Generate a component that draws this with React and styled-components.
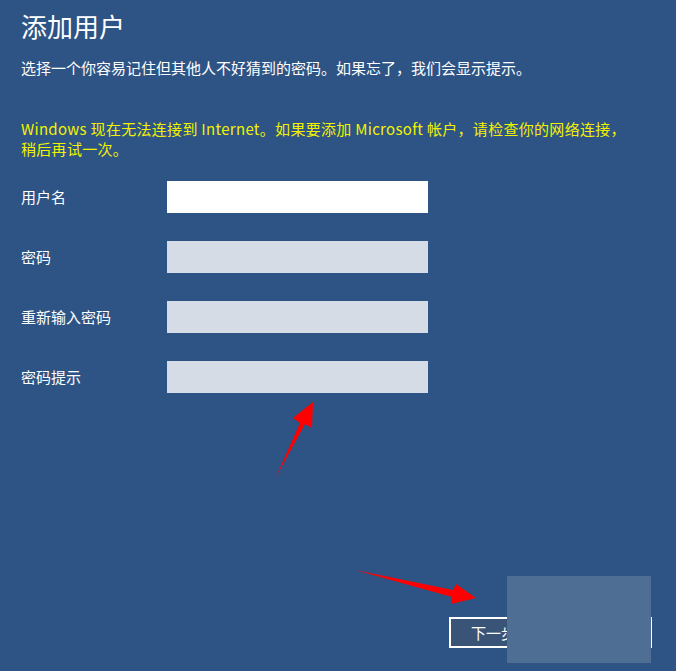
import React from 'react';
import styled, { createGlobalStyle } from 'styled-components';

const GlobalStyle = createGlobalStyle`
    html, body {
        margin: 0;
        padding: 0;
        background: #2e5485;
    }
    * {
        box-sizing: border-box;
    }
`;

const Page = styled.div`
    position: relative;
    width: 676px;
    height: 671px;
    overflow: hidden;
    background: #2e5485;
    color: #ffffff;
    font-family: "Noto Sans CJK SC", "Noto Sans", sans-serif;
    display: flex;
    flex-direction: column;
    padding: 0 21px;
`;

const Title = styled.h1`
    margin: 8px 0 0 0;
    font-size: 26px;
    font-weight: 400;
    line-height: 36px;
`;

const Subtitle = styled.p`
    margin: 14px 0 0 0;
    font-size: 15px;
    line-height: 20px;
`;

const Warning = styled.p`
    margin: 41px 0 0 0;
    font-size: 15px;
    line-height: 20px;
    letter-spacing: 0.3px;
    color: #f2f200;
`;

const Form = styled.div`
    margin-top: 22px;
    display: flex;
    flex-direction: column;
    gap: 28px;
`;

const Row = styled.div`
    display: flex;
    align-items: center;
    height: 32px;
`;

const Label = styled.label`
    width: 146px;
    font-size: 15px;
    line-height: 20px;
`;

const Field = styled.input`
    width: 261px;
    height: 32px;
    border: none;
    outline: none;
    padding: 0 8px;
    font-size: 15px;
    background: ${(p) => (p.$active ? '#ffffff' : '#d5dce6')};
`;

const Spacer = styled.div`
    flex: 1;
`;

const Footer = styled.div`
    display: flex;
    justify-content: flex-end;
    padding-right: 3px;
    margin-bottom: 23px;
`;

const NextButton = styled.button`
    width: 203px;
    height: 31px;
    border: 2px solid #ffffff;
    background: #3a5478;
    color: #ffffff;
    font-family: "Noto Sans CJK SC", sans-serif;
    font-size: 15px;
    text-align: left;
    padding: 0 0 0 20px;
`;

const Redact = styled.div`
    position: absolute;
    left: 507px;
    top: 576px;
    width: 144px;
    height: 87px;
    background: #4f6e93;
`;

const Arrows = styled.svg`
    position: absolute;
    left: 0;
    top: 0;
    pointer-events: none;
`;

const fields = [
    { label: '用户名', active: true },
    { label: '密码' },
    { label: '重新输入密码' },
    { label: '密码提示' },
];

const App = () => {
    return (
        <>
            <GlobalStyle />
            <Page>
                <Title>添加用户</Title>
                <Subtitle>选择一个你容易记住但其他人不好猜到的密码。如果忘了，我们会显示提示。</Subtitle>
                <Warning>
                    Windows 现在无法连接到 Internet。如果要添加 Microsoft 帐户，请检查你的网络连接，
                    <br />
                    稍后再试一次。
                </Warning>
                <Form>
                    {fields.map((f) => (
                        <Row key={f.label}>
                            <Label>{f.label}</Label>
                            <Field $active={f.active} type={f.label === '用户名' ? 'text' : 'password'} />
                        </Row>
                    ))}
                </Form>
                <Spacer />
                <Footer>
                    <NextButton>下一步</NextButton>
                </Footer>
                <Redact />
                <Arrows width="676" height="671" viewBox="0 0 676 671">
                    <polygon points="276,477 300,423 293,418 313,402 312,428 305,424" fill="#ff0000" />
                    <polygon points="355,570 453,590 456,584 476,598 451,604 452,597" fill="#ff0000" />
                </Arrows>
            </Page>
        </>
    );
};

export default App;
